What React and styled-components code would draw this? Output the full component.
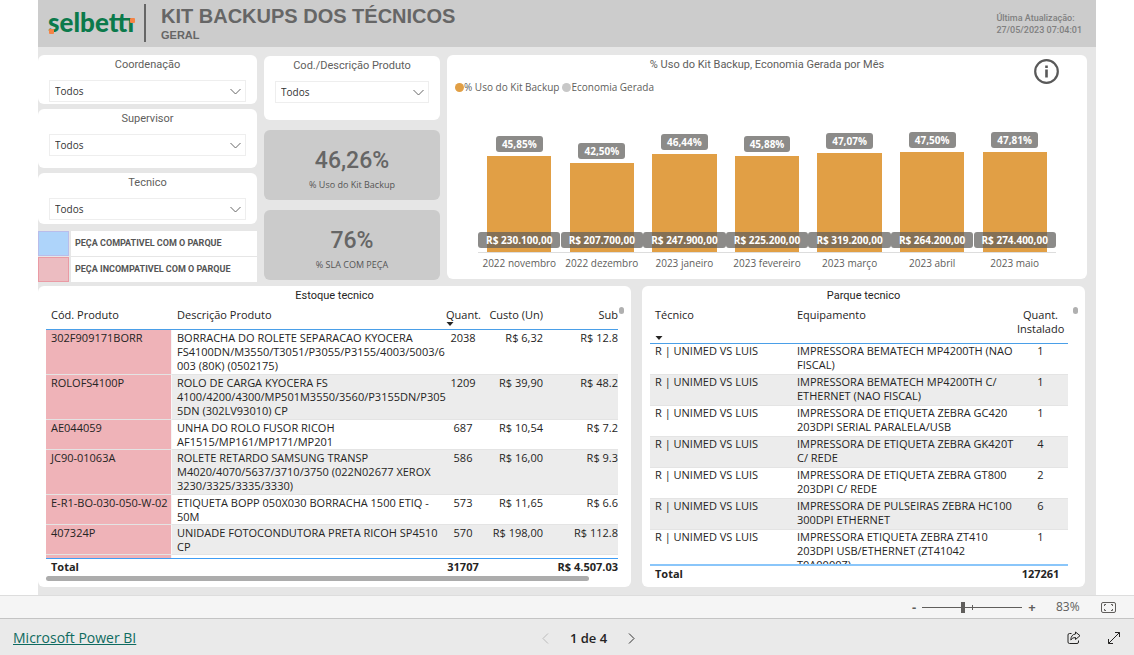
import React from "react";
import styled, { createGlobalStyle } from "styled-components";

const ui = '"Open Sans", "Noto Sans", sans-serif';
const din = 'Roboto, "Open Sans", sans-serif';

const GlobalStyle = createGlobalStyle`
  *, *::before, *::after { box-sizing: border-box; }
  body { margin: 0; background: #fff; font-family: ${ui}; color: #252423; }
`;

const Page = styled.div`
  min-height: 100vh;
  display: flex;
  flex-direction: column;
`;

const Report = styled.main`
  flex: 1;
  margin: 0 38px;
  background: #e6e6e6;
`;

const Header = styled.header`
  display: flex;
  align-items: flex-start;
  height: 47px;
  padding: 4px 14px 0 10px;
  background: #ccc;
`;

const Logo = styled.div`
  position: relative;
  width: 98px;
  height: 38px;
  border-right: 2px solid #666;
  font: 900 26px/36px Lato, sans-serif;
  color: #0b7a4b;
`;

const LogoDot = styled.i`
  position: absolute;
  width: 5px;
  height: 5px;
  border-radius: 1px;
  background: #f58345;
  left: ${(p) => p.$x}px;
  top: ${(p) => p.$y}px;
`;

const Heading = styled.div`
  flex: 1;
  padding-left: 15px;
  font-family: "Liberation Sans", sans-serif;
  color: #666;
`;

const Title = styled.h1`
  margin: 0;
  font-size: 20px;
  line-height: 24px;
`;

const Subtitle = styled.p`
  margin: 0;
  font-size: 11px;
  line-height: 14px;
  font-weight: bold;
`;

const Updated = styled.p`
  margin: 0;
  padding-top: 8px;
  font: 500 9px/12px ${din};
  color: #808080;
`;

const TopRow = styled.section`
  display: grid;
  grid-template-columns: 219fr 176fr 640fr;
  gap: 7px;
  padding: 8px 9px 4px 0;
`;

const Column = styled.div`
  display: flex;
  flex-direction: column;
  gap: ${(p) => p.$gap}px;
  padding-top: ${(p) => p.$top || 0}px;
`;

const Card = styled.div`
  border-radius: 6px;
  background: #fff;
`;

const FilterCard = styled(Card)`
  display: flex;
  flex-direction: column;
  height: ${(p) => p.$height}px;
  padding: 0 11px;
`;

const FilterLabel = styled.label`
  font: 11px/19px ${din};
  text-align: center;
  color: #605e5c;
`;

const SelectBox = styled.div`
  display: grid;
  align-items: center;
  margin-top: 6px;
  > * { grid-area: 1 / 1; }
  svg { justify-self: end; margin-right: 5px; pointer-events: none; }
`;

const Select = styled.select`
  appearance: none;
  width: 100%;
  height: 22px;
  padding: 0 5px;
  border: 1px solid #eee;
  border-radius: 0;
  background: #fff;
  font: 10px/18px ${ui};
  color: #333;
`;

const KeyList = styled.div`
  display: grid;
  gap: 3px;
  margin-top: 2px;
`;

const KeyRow = styled.div`
  display: grid;
  grid-template-columns: 31px 1fr;
  gap: 2px;
  height: 23px;
`;

const Swatch = styled.span`
  border: 1px solid ${(p) => p.$border};
  background: ${(p) => p.$color};
`;

const KeyText = styled.span`
  padding-left: 4px;
  background: #fff;
  font: bold 9px/25px ${din};
  white-space: nowrap;
  color: #555;
`;

const Kpi = styled.div`
  height: 70px;
  padding-top: 16px;
  border-radius: 6px;
  background: #cbcbcb;
  text-align: center;
`;

const KpiValue = styled.div`
  font: 500 23px/30px ${din};
  color: #666;
`;

const KpiLabel = styled.div`
  font: 9px/18px ${ui};
  color: #555;
`;

const ChartCard = styled(Card)`
  position: relative;
  height: 224px;
`;

const ChartTitle = styled.h2`
  margin: 0;
  font: 11px/19px ${din};
  text-align: center;
  color: #605e5c;
`;

const InfoButton = styled.button`
  position: absolute;
  top: 4px;
  right: 28px;
  width: 25px;
  height: 25px;
  padding: 0;
  border: 0;
  background: none;
`;

const Legend = styled.div`
  display: flex;
  gap: 3px;
  padding: 5px 8px 0;
`;

const LegendItem = styled.span`
  display: flex;
  align-items: center;
  font: 10px/16px ${ui};
  color: #605e5c;
  &::before {
    content: "";
    width: 9px;
    height: 9px;
    border-radius: 50%;
    background: ${(p) => p.$color};
  }
`;

const Plot = styled.div`
  display: grid;
  grid-template-columns: repeat(7, 1fr);
  align-items: end;
  height: 178px;
  padding: 0 31px;
`;

const Month = styled.div`
  display: flex;
  flex-direction: column;
  align-items: center;
  min-width: 0;
`;

const Pill = styled.span`
  height: 16px;
  padding: 0 ${(p) => (p.$wide ? 8 : 6)}px;
  border-radius: 3px;
  background: rgba(96, 94, 92, 0.72);
  font: bold 10px/17px ${ui};
  white-space: nowrap;
  color: #fff;
`;

const BarSlot = styled.div`
  align-self: stretch;
  display: flex;
  justify-content: center;
  margin-top: 4px;
  border-bottom: 1px solid #ddd;
`;

const Bar = styled.div`
  display: flex;
  justify-content: center;
  align-items: flex-end;
  width: 78%;
  padding-bottom: 4px;
  background: #e19f45;
`;

const MonthName = styled.span`
  font: 10px/20px ${ui};
  white-space: nowrap;
  color: #605e5c;
`;

const BottomRow = styled.section`
  display: grid;
  grid-template-columns: 593fr 443fr;
  gap: 11px;
  padding: 2px 11px 8px 0;
`;

const TableCard = styled(Card)`
  position: relative;
  height: 301px;
  padding-top: 1px;
`;

const TableArea = styled.div`
  margin: 0 ${(p) => p.$right}px 0 8px;
`;

const TableTitle = styled.h2`
  margin: 0;
  font: 11px/18px ${din};
  text-align: center;
  color: #252423;
`;

const Table = styled.table`
  display: block;
  font: 11px/14px ${ui};
  white-space: pre;
`;

const Row = styled.tr`
  display: grid;
  grid-template-columns: ${(p) => p.$cols};
  height: ${(p) => p.$height}px;
`;

const Head = styled.thead`
  display: block;
  border-bottom: 1px solid #4a9fe8;
`;

const Body = styled.tbody`
  display: block;
  height: ${(p) => p.$height}px;
  overflow: hidden;
  ${Row}:nth-child(even) { background: #ececec; }
`;

const Foot = styled.tfoot`
  display: block;
  border-top: ${(p) => p.$line}px solid ${(p) => (p.$line > 1 ? "#8ac6fa" : "#3f9df5")};
  font-weight: bold;
`;

const HeadCell = styled.th`
  display: flex;
  flex-direction: column;
  justify-content: space-between;
  padding: 3px ${(p) => (p.$flush ? 0 : 4)}px 3px 5px;
  font-weight: normal;
  text-align: ${(p) => p.$align || "left"};
  svg { flex: none; }
`;

const Cell = styled.td`
  padding: ${(p) => (p.$tight ? 0 : 1)}px ${(p) => (p.$flush ? 0 : 4)}px 0 5px;
  border-bottom: 1px solid #e4e4e4;
  text-align: ${(p) => p.$align || "left"};
  ${(p) => p.$flag && "background: #efb3b8; border-right: 1px solid #f6f6f6;"}
`;

const FootCell = styled.td`
  padding: 1px ${(p) => (p.$flush ? 0 : 4)}px 0 5px;
  text-align: ${(p) => p.$align || "left"};
`;

const ScrollX = styled.div`
  width: 95%;
  height: 5px;
  border-radius: 3px;
  background: #acacac;
`;

const ScrollY = styled.div`
  position: absolute;
  top: 21px;
  right: 7px;
  width: 5px;
  height: 7px;
  border-radius: 3px;
  background: #b0b0b0;
`;

const ZoomBar = styled.div`
  display: flex;
  align-items: center;
  justify-content: flex-end;
  height: 24px;
  padding-right: 18px;
  border-top: 1px solid #ddd;
  border-bottom: 1px solid #c4c4c4;
  background: #f5f5f5;
  color: #605e5c;
`;

const IconButton = styled.button`
  display: inline-flex;
  align-items: center;
  justify-content: center;
  padding: 0;
  border: 0;
  background: none;
  font: bold 13px/16px ${ui};
  width: ${(p) => p.$width || 16}px;
  color: #605e5c;
`;

const Slider = styled.input`
  appearance: none;
  width: 100px;
  height: 12px;
  margin: 0 2px 0 0;
  background:
    linear-gradient(#605e5c, #605e5c) 51% 50% / 1px 5px no-repeat,
    linear-gradient(#605e5c, #605e5c) 0 50% / 100% 1px no-repeat;
  &::-webkit-slider-thumb {
    appearance: none;
    width: 4px;
    height: 11px;
    background: #605e5c;
  }
`;

const ZoomValue = styled.span`
  width: 60px;
  padding-left: 16px;
  font: 12px/16px ${ui};
`;

const Footer = styled.footer`
  display: grid;
  grid-template-columns: 1fr auto 1fr;
  align-items: center;
  height: 36px;
  padding: 2px 12px 0 13px;
  background: #eaeaea;
`;

const BrandLink = styled.a`
  justify-self: start;
  font: 14px/18px ${ui};
  color: #0f6b60;
`;

const Pager = styled.nav`
  display: flex;
  align-items: center;
  gap: 20px;
  padding-right: 22px;
  padding-left: 64px;
  font: 600 13px/20px ${ui};
`;

const Actions = styled.div`
  display: flex;
  justify-content: flex-end;
  gap: 24px;
`;

const Chevron = () => (
  <svg width="11" height="7" viewBox="0 0 11 7" fill="none" stroke="#666" strokeWidth="1">
    <path d="M0.5 1L5.5 6L10.5 1" />
  </svg>
);

const SortArrow = () => (
  <svg width="8" height="4" viewBox="0 0 8 4">
    <path d="M0.5 0H7.5L4 4Z" fill="#252423" />
  </svg>
);

function Filter({ id, label, height }) {
  return (
    <FilterCard $height={height}>
      <FilterLabel htmlFor={id}>{label}</FilterLabel>
      <SelectBox>
        <Select id={id}>
          <option>Todos</option>
        </Select>
        <Chevron />
      </SelectBox>
    </FilterCard>
  );
}

const months = [
  ["2022 novembro", 45.85, "R$ 230.100,00"],
  ["2022 dezembro", 42.5, "R$ 207.700,00"],
  ["2023 janeiro", 46.44, "R$ 247.900,00"],
  ["2023 fevereiro", 45.88, "R$ 225.200,00"],
  ["2023 março", 47.07, "R$ 319.200,00"],
  ["2023 abril", 47.5, "R$ 264.200,00"],
  ["2023 maio", 47.81, "R$ 274.400,00"],
];

const stock = [
  ["302F909171BORR", "BORRACHA DO ROLETE SEPARACAO KYOCERA\nFS4100DN/M3550/T3051/P3055/P3155/4003/5003/6\n003 (80K) (0502175)", "2038", "R$ 6,32", "R$ 12.8"],
  ["ROLOFS4100P", "ROLO DE CARGA KYOCERA FS\n4100/4200/4300/MP501M3550/3560/P3155DN/P305\n5DN (302LV93010) CP", "1209", "R$ 39,90", "R$ 48.2"],
  ["AE044059", "UNHA DO ROLO FUSOR RICOH\nAF1515/MP161/MP171/MP201", "687", "R$ 10,54", "R$ 7.2"],
  ["JC90-01063A", "ROLETE RETARDO SAMSUNG TRANSP\nM4020/4070/5637/3710/3750 (022N02677 XEROX\n3230/3325/3335/3330)", "586", "R$ 16,00", "R$ 9.3"],
  ["E-R1-BO-030-050-W-02", "ETIQUETA BOPP 050X030 BORRACHA 1500 ETIQ -\n50M", "573", "R$ 11,65", "R$ 6.6"],
  ["407324P", "UNIDADE FOTOCONDUTORA PRETA RICOH SP4510\nCP", "570", "R$ 198,00", "R$ 112.8"],
  ["", "", "", "", ""],
];

const park = [
  ["IMPRESSORA BEMATECH MP4200TH (NAO\nFISCAL)", "1"],
  ["IMPRESSORA BEMATECH MP4200TH C/\nETHERNET (NAO FISCAL)", "1"],
  ["IMPRESSORA DE ETIQUETA ZEBRA GC420\n203DPI SERIAL PARALELA/USB", "1"],
  ["IMPRESSORA DE ETIQUETA ZEBRA GK420T\nC/ REDE", "4"],
  ["IMPRESSORA DE ETIQUETA ZEBRA GT800\n203DPI C/ REDE", "2"],
  ["IMPRESSORA DE PULSEIRAS ZEBRA HC100\n300DPI ETHERNET", "6"],
  ["IMPRESSORA ETIQUETA ZEBRA ZT410\n203DPI USB/ETHERNET (ZT41042\nT0A0000Z)", "1"],
];

const stockCols = "126px minmax(0, 1fr) 43px 63px 71px";
const stockTotalCols = "126px minmax(0, 1fr) 43px 134px";
const parkCols = "142px minmax(0, 1fr) 56px";

const rowHeight = (text, short) => (text.split("\n").length > 2 ? 45 : short);
const percent = (value) => value.toFixed(2).replace(".", ",") + "%";

export default function App() {
  return (
    <Page>
      <GlobalStyle />
      <Report>
        <Header>
          <Logo role="img" aria-label="selbetti">
            selbettı
            <LogoDot $x={1} $y={25} />
            <LogoDot $x={82} $y={14} />
          </Logo>
          <Heading>
            <Title>KIT BACKUPS DOS TÉCNICOS</Title>
            <Subtitle>GERAL</Subtitle>
          </Heading>
          <Updated>
            Última Atualização:
            <br />
            27/05/2023 07:04:01
          </Updated>
        </Header>

        <TopRow>
          <Column $gap={5}>
            <Filter id="coordenacao" label="Coordenação" height={49} />
            <Filter id="supervisor" label="Supervisor" height={59} />
            <Filter id="tecnico" label="Tecnico" height={51} />
            <KeyList>
              <KeyRow>
                <Swatch $color="#aed4fa" $border="#b9bdea" />
                <KeyText>PEÇA COMPATIVEL COM O PARQUE</KeyText>
              </KeyRow>
              <KeyRow>
                <Swatch $color="#ecbcc1" $border="#ea9aa4" />
                <KeyText>PEÇA INCOMPATIVEL COM O PARQUE</KeyText>
              </KeyRow>
            </KeyList>
          </Column>

          <Column $gap={10} $top={1}>
            <Filter id="produto" label="Cod./Descrição Produto" height={64} />
            <Kpi>
              <KpiValue>46,26%</KpiValue>
              <KpiLabel>% Uso do Kit Backup</KpiLabel>
            </Kpi>
            <Kpi>
              <KpiValue>76%</KpiValue>
              <KpiLabel>% SLA COM PEÇA</KpiLabel>
            </Kpi>
          </Column>

          <ChartCard>
            <ChartTitle>% Uso do Kit Backup, Economia Gerada por Mês</ChartTitle>
            <InfoButton aria-label="Informações">
              <svg width="25" height="25" viewBox="0 0 25 25" fill="none" stroke="#595959">
                <circle cx="12.5" cy="12.5" r="11.3" strokeWidth="2.2" />
                <path d="M12.5 10.5V18.5M12.5 6.5V9" strokeWidth="2.6" />
              </svg>
            </InfoButton>
            <Legend>
              <LegendItem $color="#e19f45">% Uso do Kit Backup</LegendItem>
              <LegendItem $color="#c8c8c8">Economia Gerada</LegendItem>
            </Legend>
            <Plot>
              {months.map(([name, value, saved]) => (
                <Month key={name}>
                  <Pill>{percent(value)}</Pill>
                  <BarSlot>
                    <Bar style={{ height: Math.round(value * 2.1) }}>
                      <Pill $wide>{saved}</Pill>
                    </Bar>
                  </BarSlot>
                  <MonthName>{name}</MonthName>
                </Month>
              ))}
            </Plot>
          </ChartCard>
        </TopRow>

        <BottomRow>
          <TableCard>
            <TableTitle>Estoque tecnico</TableTitle>
            <TableArea $right={13}>
              <Table>
                <Head>
                  <Row $cols={stockCols} $height={24}>
                    <HeadCell>Cód. Produto</HeadCell>
                    <HeadCell>Descrição Produto</HeadCell>
                    <HeadCell>
                      Quant.
                      <SortArrow />
                    </HeadCell>
                    <HeadCell $align="right">Custo (Un)</HeadCell>
                    <HeadCell $align="right" $flush>Sub</HeadCell>
                  </Row>
                </Head>
                <Body $height={228}>
                  {stock.map(([code, text, count, cost, sub]) => (
                    <Row key={code} $cols={stockCols} $height={rowHeight(text, 30)}>
                      <Cell $flag>{code}</Cell>
                      <Cell>{text}</Cell>
                      <Cell $align="center">{count}</Cell>
                      <Cell $align="right">{cost}</Cell>
                      <Cell $align="right" $flush>{sub}</Cell>
                    </Row>
                  ))}
                </Body>
                <Foot $line={1}>
                  <Row $cols={stockTotalCols} $height={17}>
                    <FootCell>Total</FootCell>
                    <FootCell />
                    <FootCell $align="center">31707</FootCell>
                    <FootCell $align="right" $flush>R$ 4.507.03</FootCell>
                  </Row>
                </Foot>
              </Table>
              <ScrollX />
            </TableArea>
            <ScrollY />
          </TableCard>

          <TableCard>
            <TableTitle>Parque tecnico</TableTitle>
            <TableArea $right={17}>
              <Table>
                <Head>
                  <Row $cols={parkCols} $height={38}>
                    <HeadCell>
                      Técnico
                      <SortArrow />
                    </HeadCell>
                    <HeadCell>Equipamento</HeadCell>
                    <HeadCell $align="center">{"Quant.\nInstalado"}</HeadCell>
                  </Row>
                </Head>
                <Body $height={220}>
                  {park.map(([text, count]) => (
                    <Row key={text} $cols={parkCols} $height={rowHeight(text, 31)}>
                      <Cell $tight>R | UNIMED VS LUIS</Cell>
                      <Cell $tight>{text}</Cell>
                      <Cell $tight $align="center">{count}</Cell>
                    </Row>
                  ))}
                </Body>
                <Foot $line={2}>
                  <Row $cols={parkCols} $height={17}>
                    <FootCell>Total</FootCell>
                    <FootCell />
                    <FootCell $align="center">127261</FootCell>
                  </Row>
                </Foot>
              </Table>
            </TableArea>
            <ScrollY />
          </TableCard>
        </BottomRow>
      </Report>

      <ZoomBar>
        <IconButton aria-label="Reduzir">-</IconButton>
        <Slider type="range" min="0" max="100" defaultValue="41" aria-label="Zoom" />
        <IconButton aria-label="Ampliar">+</IconButton>
        <ZoomValue>83%</ZoomValue>
        <IconButton aria-label="Ajustar à página">
          <svg width="15" height="11" viewBox="0 0 15 11" fill="none" stroke="#605e5c">
            <rect x="0.5" y="0.5" width="14" height="10" rx="1.5" />
            <path d="M5 2.5H3.5V4M10 2.5H11.5V4M5 8.5H3.5V7M10 8.5H11.5V7" />
          </svg>
        </IconButton>
      </ZoomBar>

      <Footer>
        <BrandLink href="#">Microsoft Power BI</BrandLink>
        <Pager aria-label="Páginas">
          <IconButton aria-label="Página anterior" $width={8}>
            <svg width="7" height="11" viewBox="0 0 7 11" fill="none" stroke="#bbb">
              <path d="M6 0.5L1 5.5L6 10.5" />
            </svg>
          </IconButton>
          1 de 4
          <IconButton aria-label="Próxima página" $width={8}>
            <svg width="7" height="11" viewBox="0 0 7 11" fill="none" stroke="#333">
              <path d="M1 0.5L6 5.5L1 10.5" />
            </svg>
          </IconButton>
        </Pager>
        <Actions>
          <IconButton aria-label="Compartilhar">
            <svg width="14" height="14" viewBox="0 0 14 14" fill="none" stroke="#252423" strokeLinejoin="round">
              <path d="M4.5 2.5H2.5Q1 2.5 1 4V11Q1 12.5 2.5 12.5H10Q11.5 12.5 11.5 11V9.5" />
              <path d="M8.5 1L13 4.7L8.5 8.5V6.5Q5.5 6.3 3.8 9Q4 3.5 8.5 3Z" />
            </svg>
          </IconButton>
          <IconButton aria-label="Tela cheia">
            <svg width="14" height="14" viewBox="0 0 14 14" fill="none" stroke="#252423">
              <path d="M1.5 12.5L12.5 1.5M8 1.5H12.5V6M1.5 8V12.5H6" />
            </svg>
          </IconButton>
        </Actions>
      </Footer>
    </Page>
  );
}
